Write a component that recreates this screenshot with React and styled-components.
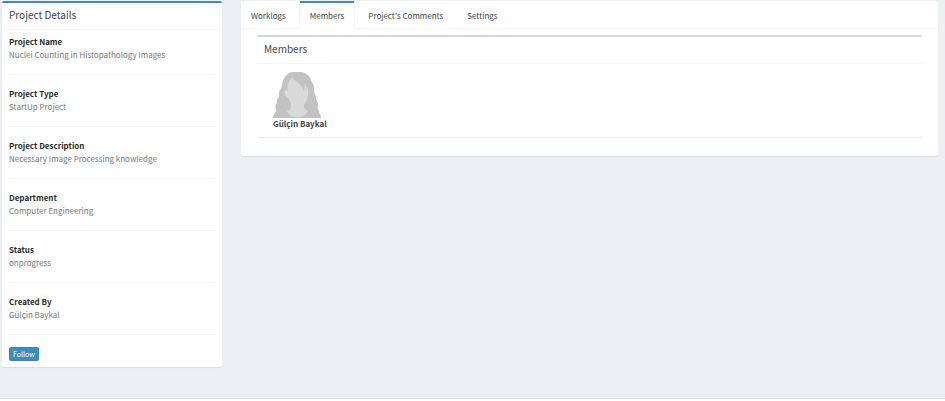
import React, { useState } from 'react';
import styled, { createGlobalStyle, css } from 'styled-components';

const GlobalStyle = createGlobalStyle`
  * { box-sizing: border-box; }
  body {
    margin: 0;
    background: #ecf0f5;
    color: #444;
    font-family: "Noto Sans CJK JP", "Noto Sans", sans-serif;
    font-size: 8px;
    line-height: 13px;
  }
`;

const Page = styled.div`
  display: flex;
  flex-direction: column;
  min-height: 100vh;
`;

const Content = styled.main`
  flex: 1;
  display: grid;
  grid-template-columns: calc(25% - 14px) minmax(0, 1fr);
  align-items: start;
  gap: 19px;
  padding: 1px 7px 30px 2px;
`;

const Footer = styled.footer`
  height: 3px;
  background: #fff;
  border-top: 1px solid #dcdfe6;
`;

const Box = styled.section`
  background: #fff;
  border-top: 2px solid ${(p) => (p.$primary ? '#3c8dbc' : '#d2d6de')};
  border-radius: 2px;
  box-shadow: 0 1px 1px rgba(0, 0, 0, 0.08);
`;

const BoxHeader = styled.header`
  padding: 5px 7px 7px;
  border-bottom: 1px solid #f6f6f6;
`;

const BoxTitle = styled.h3`
  margin: 0;
  font-size: 10px;
  font-weight: 400;
  line-height: 14px;
`;

const DetailsBody = styled.div`
  padding: 5px 7px 6px;
`;

const DetailList = styled.dl`
  margin: 0;
`;

const Detail = styled.div`
  margin-bottom: 12px;
  padding-bottom: 13px;
  border-bottom: 1px solid #f4f4f4;
`;

const Term = styled.dt`
  color: #2b2b2b;
  font-weight: 700;
`;

const Value = styled.dd`
  margin: 0;
  color: #777;
`;

const FollowButton = styled.button`
  display: block;
  height: 14px;
  padding: 0 3px;
  border: 1px solid #3a86b3;
  border-radius: 2px;
  background: #3c8dbc;
  color: #fff;
  font-family: inherit;
  font-size: 7px;
  line-height: 12px;
  cursor: pointer;
`;

const TabsPanel = styled.section`
  background: #fff;
  border-radius: 2px;
  box-shadow: 0 1px 1px rgba(0, 0, 0, 0.08);
`;

const TabList = styled.div`
  display: flex;
  gap: 4px;
  height: 28px;
  border-bottom: 1px solid #f4f4f4;
`;

const Tab = styled.button`
  height: 28px;
  padding: 0 10px 2px;
  border: 0;
  border-top: 2px solid transparent;
  background: transparent;
  color: #444;
  font: inherit;
  cursor: pointer;
  ${(p) => p.$active && css`
    border-top-color: #3c8dbc;
    background: #fff;
    box-shadow: -1px 0 #f4f4f4, 1px 0 #f4f4f4;
  `}
`;

const TabContent = styled.div`
  padding: 6px 16px 19px;
`;

const MemberList = styled.ul`
  display: flex;
  margin: 0;
  padding: 8px 16px;
  list-style: none;
`;

const Member = styled.li`
  font-weight: 700;
  line-height: 11px;
`;

const Portrait = styled.svg`
  display: block;
  width: 48px;
  height: 46px;
`;

const details = [
  ['Project Name', 'Nuclei Counting in Histopathology Images'],
  ['Project Type', 'StartUp Project'],
  ['Project Description', 'Necessary Image Processing knowledge'],
  ['Department', 'Computer Engineering'],
  ['Status', 'onprogress'],
  ['Created By', 'Gülçin Baykal'],
];

const tabs = ['Worklogs', 'Members', "Project's Comments", 'Settings'];

function Avatar() {
  return (
    <Portrait viewBox="0 0 48 46" role="img" aria-label="Member portrait">
      <path fill="#c2c2c2" d="M0 46C0 42 4 40 3 37C1 33 5 31 4 29C4 26 7 25 6 22C6 18 9 16 9 13C10 6 14 1 19 0H29C34 1 37 5 38 8C39 12 42 13 41 18C41 21 43 23 43 25C42 28 46 30 45 34C43 37 47 38 46 41C47 42 48 44 48 46Z" />
      <path fill="#dadada" d="M19 5C22 10 29 12 31 19L32 11L34 17L35 15C35 20 36 23 34 27C33 30 31 31 31 34C31 38 34 38 35 39C33 42 31 45 24 45C18 45 15 42 14 39C18 38 18 35 18 32C17 29 16 27 15 26C12 25 11 19 12 18C14 17 15 20 15 20C14 14 15 9 19 5Z" />
    </Portrait>
  );
}

export default function App() {
  const [active, setActive] = useState('Members');
  return (
    <Page>
      <GlobalStyle />
      <Content>
        <Box $primary>
          <BoxHeader><BoxTitle>Project Details</BoxTitle></BoxHeader>
          <DetailsBody>
            <DetailList>
              {details.map(([term, value]) => (
                <Detail key={term}>
                  <Term>{term}</Term>
                  <Value>{value}</Value>
                </Detail>
              ))}
            </DetailList>
            <FollowButton type="button">Follow</FollowButton>
          </DetailsBody>
        </Box>
        <TabsPanel>
          <TabList role="tablist">
            {tabs.map((name) => (
              <Tab
                key={name}
                type="button"
                role="tab"
                aria-selected={active === name}
                $active={active === name}
                onClick={() => setActive(name)}
              >
                {name}
              </Tab>
            ))}
          </TabList>
          <TabContent role="tabpanel">
            <Box>
              <BoxHeader><BoxTitle>Members</BoxTitle></BoxHeader>
              <MemberList>
                <Member><Avatar />Gülçin Baykal</Member>
              </MemberList>
            </Box>
          </TabContent>
        </TabsPanel>
      </Content>
      <Footer />
    </Page>
  );
}
